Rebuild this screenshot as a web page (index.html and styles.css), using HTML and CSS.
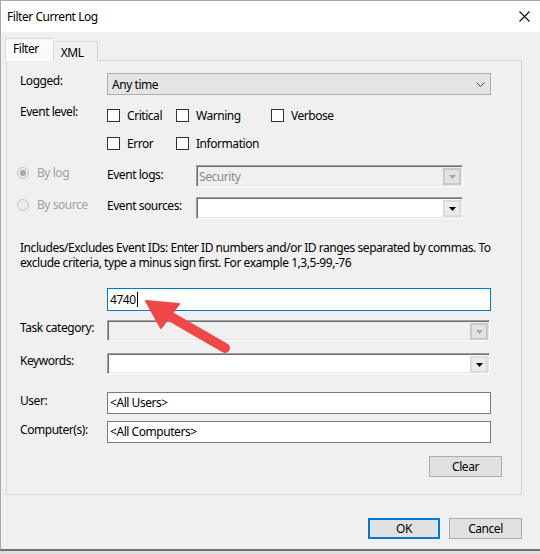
FILE: index.html
```html
<!DOCTYPE html>
<html lang="en">
<head>
  <meta charset="UTF-8">
  <title>Filter Current Log</title>
  <link rel="stylesheet" href="styles.css">
</head>
<body>

  <div class="dialog">
    <div class="titlebar">
      <span class="title">Filter Current Log</span>
      <svg class="close" width="11" height="11" viewBox="0 0 11 11">
        <path d="M0.5 0.5L10.5 10.5M10.5 0.5L0.5 10.5" stroke="#111" stroke-width="1.1" fill="none"/>
      </svg>
    </div>

    <div class="content">
      <div class="tabs">
        <span class="tab tab-active">Filter</span>
        <span class="tab">XML</span>
      </div>

      <div class="panel">
        <div class="row">
          <span class="label">Logged:</span>
          <div class="select">
            <span>Any time</span>
            <svg width="9" height="5" viewBox="0 0 9 5"><path d="M0.5 0.5L4.5 4.5L8.5 0.5" stroke="#444" fill="none"/></svg>
          </div>
        </div>

        <div class="row row-level">
          <span class="label">Event level:</span>
          <div class="levels">
            <label class="check"><span class="box"></span>Critical</label>
            <label class="check"><span class="box"></span>Warning</label>
            <label class="check"><span class="box"></span>Verbose</label>
            <label class="check"><span class="box"></span>Error</label>
            <label class="check"><span class="box"></span>Information</label>
          </div>
        </div>

        <div class="row row-source">
          <span class="option"><span class="radio radio-on"></span>By log</span>
          <span class="sublabel">Event logs:</span>
          <div class="combo combo-short combo-disabled">
            <span class="combo-text">Security</span>
            <span class="combo-btn"><svg width="7" height="4" viewBox="0 0 7 4"><path d="M0 0H7L3.5 4Z" fill="#a8a8a8"/></svg></span>
          </div>
        </div>

        <div class="row row-source row-next">
          <span class="option"><span class="radio"></span>By source</span>
          <span class="sublabel sublabel-low">Event sources:</span>
          <div class="combo combo-short">
            <span class="combo-text"></span>
            <span class="combo-btn"><svg width="7" height="4" viewBox="0 0 7 4"><path d="M0 0H7L3.5 4Z" fill="#000"/></svg></span>
          </div>
        </div>

        <p class="hint">Includes/Excludes Event IDs: Enter ID numbers and/or ID ranges separated by commas. To exclude criteria, type a minus sign first. For example 1,3,5-99,-76</p>

        <div class="row row-ids">
          <span class="label"></span>
          <div class="field field-focus">4740<span class="caret"></span></div>
        </div>

        <div class="row row-task">
          <span class="label">Task category:</span>
          <div class="combo combo-disabled">
            <span class="combo-text"></span>
            <span class="combo-btn"><svg width="7" height="4" viewBox="0 0 7 4"><path d="M0 0H7L3.5 4Z" fill="#a8a8a8"/></svg></span>
          </div>
        </div>

        <div class="row row-keywords">
          <span class="label">Keywords:</span>
          <div class="combo">
            <span class="combo-text"></span>
            <span class="combo-btn"><svg width="7" height="4" viewBox="0 0 7 4"><path d="M0 0H7L3.5 4Z" fill="#000"/></svg></span>
          </div>
        </div>

        <div class="row row-user">
          <span class="label">User:</span>
          <div class="field">&lt;All Users&gt;</div>
        </div>

        <div class="row row-computer">
          <span class="label">Computer(s):</span>
          <div class="field">&lt;All Computers&gt;</div>
        </div>

        <div class="clear-row">
          <button class="btn">Clear</button>
        </div>
      </div>

      <div class="actions">
        <button class="btn btn-default">OK</button>
        <button class="btn">Cancel</button>
      </div>
    </div>

    <!-- callout pointing at the event id box -->
    <svg class="callout" width="100" height="70" viewBox="0 0 100 70">
      <line x1="28" y1="22" x2="80" y2="52" stroke="#f04848" stroke-width="10" stroke-linecap="round"/>
      <path d="M1 5L34 8L16 32Z" fill="#f04848" stroke="#f04848" stroke-width="2" stroke-linejoin="round"/>
    </svg>
  </div>

</body>
</html>
```

FILE: styles.css
```css
html {
  background-color: #dedede;
}

body {
  margin: 0;
  font-family: "Noto Sans", sans-serif;
  font-size: 12px;
  line-height: 15px;
  letter-spacing: -0.45px;
  color: #000;
}

.dialog {
  position: relative;
  width: 539px;
  height: 548px;
  background-color: #f0f0f0;
  border-left: 1px solid #a9a9a9;
  border-top: 1px solid #a9a9a9;
  border-bottom: 2px solid #707070;
}

.titlebar {
  display: flex;
  align-items: center;
  justify-content: space-between;
  height: 31px;
  padding: 0 10px 0 6px;
  background-color: #fff;
}

.title {
  padding-bottom: 1px;
}

.content {
  padding: 7px 0 0 5px;
}

.tabs {
  display: flex;
  align-items: flex-end;
  height: 22px;
}

.tab {
  height: 19px;
  padding: 0 13px 0 7px;
  line-height: 22px;
  border: 1px solid #d9d9d9;
  border-bottom: none;
  background-color: #f0f0f0;
}

.tab-active {
  position: relative;
  z-index: 1;
  height: 22px;
  margin-left: -1px;
  padding: 0 14px 0 7px;
  line-height: 20px;
  background-color: #fbfbfb;
  border-right: none;
}

.panel {
  width: 501px;
  height: 406px;
  margin-top: -1px;
  padding: 12px 0 15px 13px;
  border: 1px solid #d9d9d9;
  background-color: #f0f0f0;
}

.row {
  display: flex;
  align-items: flex-start;
}

.label {
  width: 87px;
  flex: none;
}

.select {
  display: flex;
  align-items: center;
  justify-content: space-between;
  box-sizing: border-box;
  width: 384px;
  height: 22px;
  padding: 0 5px 0 4px;
  background-color: #e5e5e5;
  border: 1px solid #adadad;
}

.row-level {
  margin-top: 8px;
}

.row-level .label {
  padding-top: 1px;
}

.levels {
  display: grid;
  grid-template-columns: 69px 95px auto;
  grid-auto-rows: 24px;
  row-gap: 4px;
}

.check {
  display: flex;
  align-items: center;
  gap: 7px;
}

.box {
  box-sizing: border-box;
  width: 13px;
  height: 13px;
  border: 1px solid #333;
  background-color: #fff;
}

.row-source {
  margin-top: 10px;
}

.option {
  display: flex;
  align-items: center;
  gap: 8px;
  width: 90px;
  margin-left: -3px;
  color: #a0a0a0;
}

.radio {
  position: relative;
  box-sizing: border-box;
  width: 12px;
  height: 12px;
  border: 1px solid #c4c4c4;
  border-radius: 50%;
  background-color: #ececec;
}

.radio-on::after {
  content: "";
  position: absolute;
  top: 2px;
  left: 2px;
  width: 6px;
  height: 6px;
  border-radius: 50%;
  background-color: #a9a9a9;
}

.sublabel {
  width: 89px;
  flex: none;
  padding-top: 2px;
}

.sublabel-low {
  padding-top: 1px;
}

/* classic sunken combo box */
.combo {
  display: flex;
  align-items: flex-start;
  box-sizing: border-box;
  width: 383px;
  height: 21px;
  padding: 1px 1px 0 2px;
  background-color: #fff;
  border: 1px solid;
  border-color: #a0a0a0 #fff #fff #a0a0a0;
  box-shadow: inset 1px 1px 0 #6d6d6d, inset -1px -1px 0 #e3e3e3;
}

.combo-short {
  width: 267px;
  height: 22px;
}

.combo-disabled {
  background-color: #f0f0f0;
}

.combo-text {
  flex: 1;
  padding-top: 2px;
  color: #8a8a8a;
}

.combo-btn {
  display: flex;
  align-items: center;
  justify-content: center;
  box-sizing: border-box;
  width: 18px;
  height: 17px;
  margin-top: 1px;
  background-color: #ececec;
  border: 2px solid #dcdcdc;
}

.combo-disabled .combo-btn {
  background-color: #e2e2e2;
  border-color: #c9c9c9;
}

.hint {
  margin: 21px 0 0;
  width: 478px;
}

.field {
  display: flex;
  align-items: center;
  box-sizing: border-box;
  width: 384px;
  height: 23px;
  padding: 0 2px 1px;
  background-color: #fff;
  border: 1px solid #7a7a7a;
}

.field-focus {
  border-color: #0078d7;
}

.caret {
  width: 1px;
  height: 15px;
  margin-left: 1px;
  background-color: #000;
}

.row-ids {
  margin-top: 18px;
}

.row-task {
  margin-top: 9px;
}

.row-keywords {
  margin-top: 12px;
}

.row-user {
  margin-top: 18px;
}

.row-user .field,
.row-computer .field {
  height: 22px;
}

.row-user .label,
.row-computer .label {
  padding-top: 1px;
}

.row-computer {
  margin-top: 7px;
}

.clear-row {
  display: flex;
  justify-content: flex-end;
  margin: 13px 19px 0 0;
}

.btn {
  box-sizing: border-box;
  width: 73px;
  height: 21px;
  padding: 0 0 1px;
  font: inherit;
  letter-spacing: inherit;
  color: #000;
  background-color: #e1e1e1;
  border: 1px solid #adadad;
}

.btn-default {
  width: 72px;
  border: 2px solid #0078d7;
}

.actions {
  display: flex;
  justify-content: flex-end;
  gap: 9px;
  margin: 23px 18px 0 0;
}

.callout {
  position: absolute;
  left: 144px;
  top: 295px;
}
```
